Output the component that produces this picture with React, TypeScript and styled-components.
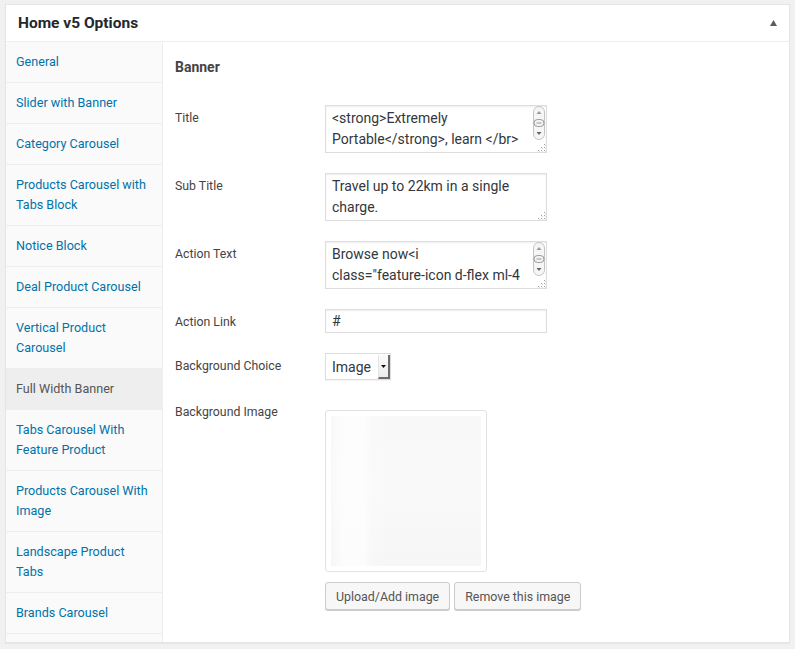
import React from "react";
import styled, { createGlobalStyle } from "styled-components";

const GlobalStyle = createGlobalStyle`
  html, body { margin: 0; padding: 0; background: #f1f1f1; }
  body { font-family: Roboto, "Liberation Sans", sans-serif; -webkit-font-smoothing: antialiased; }
  * { box-sizing: border-box; }
`;

const Page = styled.div`
  padding: 4px 5px 5px 5px;
`;

const Panel = styled.section`
  background: #fff;
  border: 1px solid #e5e5e5;
  box-shadow: 0 1px 1px rgba(0, 0, 0, 0.04);
`;

const Header = styled.header`
  height: 37px;
  display: flex;
  align-items: center;
  justify-content: space-between;
  padding: 0 12px;
  border-bottom: 1px solid #eee;
`;

const Title = styled.h2`
  margin: 0;
  font-size: 15.5px;
  font-weight: 700;
  line-height: 20px;
  color: #23282d;
`;

const Toggle = styled.span`
  display: flex;
  width: 7px;
  height: 6px;
  margin-top: -1px;
`;

const Body = styled.div`
  display: flex;
  align-items: stretch;
`;

const Sidebar = styled.nav`
  width: 157px;
  flex: none;
  background: #fafafa;
  border-right: 1px solid #eee;
  display: flex;
  flex-direction: column;
`;

const NavItem = styled.div<{ $active?: boolean }>`
  padding: 10px 10px;
  font-size: 12.6px;
  line-height: 20px;
  border-bottom: 1px solid #eee;
  color: ${(p) => (p.$active ? "#555" : "#0073aa")};
  background: ${(p) => (p.$active ? "#eee" : "transparent")};
`;

const Main = styled.div`
  flex: 1;
  padding: 15px 12px 32px 12px;
`;

const Heading = styled.h3`
  margin: 0 0 28px 0;
  font-size: 14px;
  line-height: 20px;
  font-weight: 700;
  color: #444;
`;

const Row = styled.div<{ $gap?: number }>`
  display: grid;
  grid-template-columns: 150px 1fr;
  margin-bottom: ${(p) => (p.$gap ?? 20)}px;
`;

const Label = styled.label`
  font-size: 12.3px;
  line-height: 20px;
  padding-top: 3px;
  color: #444;
`;

const Field = styled.div`
  display: flex;
  flex-direction: column;
  align-items: flex-start;
`;

const AreaWrap = styled.div`
  position: relative;
  width: 222px;
  height: 48px;
`;

const TextArea = styled.textarea<{ $scroll?: boolean }>`
  display: block;
  width: 100%;
  height: 100%;
  margin: 0;
  border: 1px solid #ddd;
  box-shadow: inset 0 1px 2px rgba(0, 0, 0, 0.07);
  padding: 2px ${(p) => (p.$scroll ? "14px" : "6px")} 2px 6px;
  font-family: Roboto, "Liberation Sans", sans-serif;
  font-size: 14px;
  line-height: 21px;
  color: #32373c;
  background: #fff;
  resize: none;
  overflow: hidden;
  outline: none;
`;

const ScrollBar = styled.span`
  position: absolute;
  top: 1px;
  right: 2px;
  display: flex;
`;

const Grip = styled.span`
  position: absolute;
  right: 1px;
  bottom: 1px;
  display: flex;
`;

const TextInput = styled.input`
  width: 222px;
  height: 24px;
  margin: 0;
  border: 1px solid #ddd;
  box-shadow: inset 0 1px 2px rgba(0, 0, 0, 0.07);
  padding: 2px 6px;
  font-family: Roboto, "Liberation Sans", sans-serif;
  font-size: 14px;
  color: #32373c;
  outline: none;
`;

const Select = styled.div`
  display: flex;
  align-items: stretch;
  width: 66px;
  height: 27px;
  border: 1px solid #ddd;
  background: #fff;
  box-shadow: 0 1px 1px rgba(0, 0, 0, 0.04);
`;

const SelectText = styled.span`
  flex: 1;
  padding-left: 6px;
  font-size: 14px;
  line-height: 26px;
  color: #32373c;
`;

const SelectArrow = styled.span`
  width: 12px;
  margin: 1px 0 0 0;
  display: flex;
  align-items: center;
  justify-content: center;
  background: linear-gradient(#fbfbfb, #ececec);
  border-left: 1px solid #e4e4e4;
  border-right: 2px solid #6b6b6b;
  border-bottom: 2px solid #6b6b6b;
`;

const ImageBox = styled.div`
  width: 162px;
  height: 162px;
  margin-top: 11px;
  padding: 5px;
  border: 1px solid #e2e2e2;
  border-radius: 3px;
  background: #fff;
`;

const ImageFill = styled.div`
  width: 100%;
  height: 100%;
  background:
    linear-gradient(90deg, rgba(255,255,255,0) 0%, rgba(255,255,255,0.7) 8%, rgba(255,255,255,0.7) 22%, rgba(255,255,255,0.2) 27%, rgba(255,255,255,0) 40%),
    linear-gradient(180deg, #f8f8f8 0%, #f9f9f9 50%, #f6f6f6 100%);
`;

const Buttons = styled.div`
  display: flex;
  gap: 4px;
  margin-top: 10px;
`;

const Button = styled.button`
  height: 28px;
  padding: 0 10px;
  font-family: Roboto, "Liberation Sans", sans-serif;
  font-size: 12.4px;
  color: #555;
  background: #f7f7f7;
  border: 1px solid #ccc;
  border-radius: 3px;
  box-shadow: 0 1px 0 #ccc;
  cursor: pointer;
`;

const ScrollGlyph = () => (
  <svg width="12" height="34" viewBox="0 0 12 34">
    <rect x="0.5" y="0.5" width="11" height="33" rx="5.5" fill="#f6f6f6" stroke="#c4c4c4" />
    <path d="M3.5 8 L6 5 L8.5 8 Z" fill="#9a9a9a" />
    <rect x="1" y="13.5" width="10" height="7" rx="3.5" fill="#f2f2f2" stroke="#9c9c9c" />
    <line x1="3.5" y1="17" x2="8.5" y2="17" stroke="#9c9c9c" />
    <path d="M3.5 26 L6 29 L8.5 26 Z" fill="#666" />
  </svg>
);

const GripGlyph = () => (
  <svg width="9" height="9" viewBox="0 0 9 9">
    {[
      [7, 1],
      [4, 4],
      [7, 4],
      [1, 7],
      [4, 7],
      [7, 7],
    ].map(([x, y], i) => (
      <rect key={i} x={x} y={y} width="1" height="1" fill="#a0a0a0" />
    ))}
    {[
      [8, 2],
      [5, 5],
      [8, 5],
      [2, 8],
      [5, 8],
      [8, 8],
    ].map(([x, y], i) => (
      <rect key={"s" + i} x={x} y={y} width="1" height="1" fill="#d8d8d8" />
    ))}
  </svg>
);

const Area = ({ value, scroll }: { value: string; scroll?: boolean }) => (
  <AreaWrap>
    <TextArea $scroll={scroll} readOnly value={value} />
    {scroll && (
      <ScrollBar>
        <ScrollGlyph />
      </ScrollBar>
    )}
    <Grip>
      <GripGlyph />
    </Grip>
  </AreaWrap>
);

const navItems = [
  "General",
  "Slider with Banner",
  "Category Carousel",
  "Products Carousel with Tabs Block",
  "Notice Block",
  "Deal Product Carousel",
  "Vertical Product Carousel",
  "Full Width Banner",
  "Tabs Carousel With Feature Product",
  "Products Carousel With Image",
  "Landscape Product Tabs",
  "Brands Carousel",
];

export default function App() {
  return (
    <>
      <GlobalStyle />
      <Page>
        <Panel>
          <Header>
            <Title>Home v5 Options</Title>
            <Toggle>
              <svg width="7" height="6" viewBox="0 0 7 6">
                <path d="M3.5 0 L7 6 L0 6 Z" fill="#555d66" />
              </svg>
            </Toggle>
          </Header>
          <Body>
            <Sidebar>
              {navItems.map((n) => (
                <NavItem key={n} $active={n === "Full Width Banner"}>
                  {n}
                </NavItem>
              ))}
            </Sidebar>
            <Main>
              <Heading>Banner</Heading>
              <Row>
                <Label>Title</Label>
                <Field>
                  <Area scroll value="<strong>Extremely Portable</strong>, learn </br> more" />
                </Field>
              </Row>
              <Row>
                <Label>Sub Title</Label>
                <Field>
                  <Area value="Travel up to 22km in a single charge." />
                </Field>
              </Row>
              <Row>
                <Label>Action Text</Label>
                <Field>
                  <Area scroll value={'Browse now<i\nclass="feature-icon d-flex ml-4 ec ec-arrow-right"></i>'} />
                </Field>
              </Row>
              <Row>
                <Label>Action Link</Label>
                <Field>
                  <TextInput readOnly value="#" />
                </Field>
              </Row>
              <Row $gap={19}>
                <Label>Background Choice</Label>
                <Field>
                  <Select>
                    <SelectText>Image</SelectText>
                    <SelectArrow>
                      <svg width="5" height="3" viewBox="0 0 5 3">
                        <path d="M0 0 L5 0 L2.5 3 Z" fill="#111" />
                      </svg>
                    </SelectArrow>
                  </Select>
                </Field>
              </Row>
              <Row $gap={0}>
                <Label>Background Image</Label>
                <Field>
                  <ImageBox>
                    <ImageFill />
                  </ImageBox>
                  <Buttons>
                    <Button>Upload/Add image</Button>
                    <Button>Remove this image</Button>
                  </Buttons>
                </Field>
              </Row>
            </Main>
          </Body>
        </Panel>
      </Page>
    </>
  );
}
